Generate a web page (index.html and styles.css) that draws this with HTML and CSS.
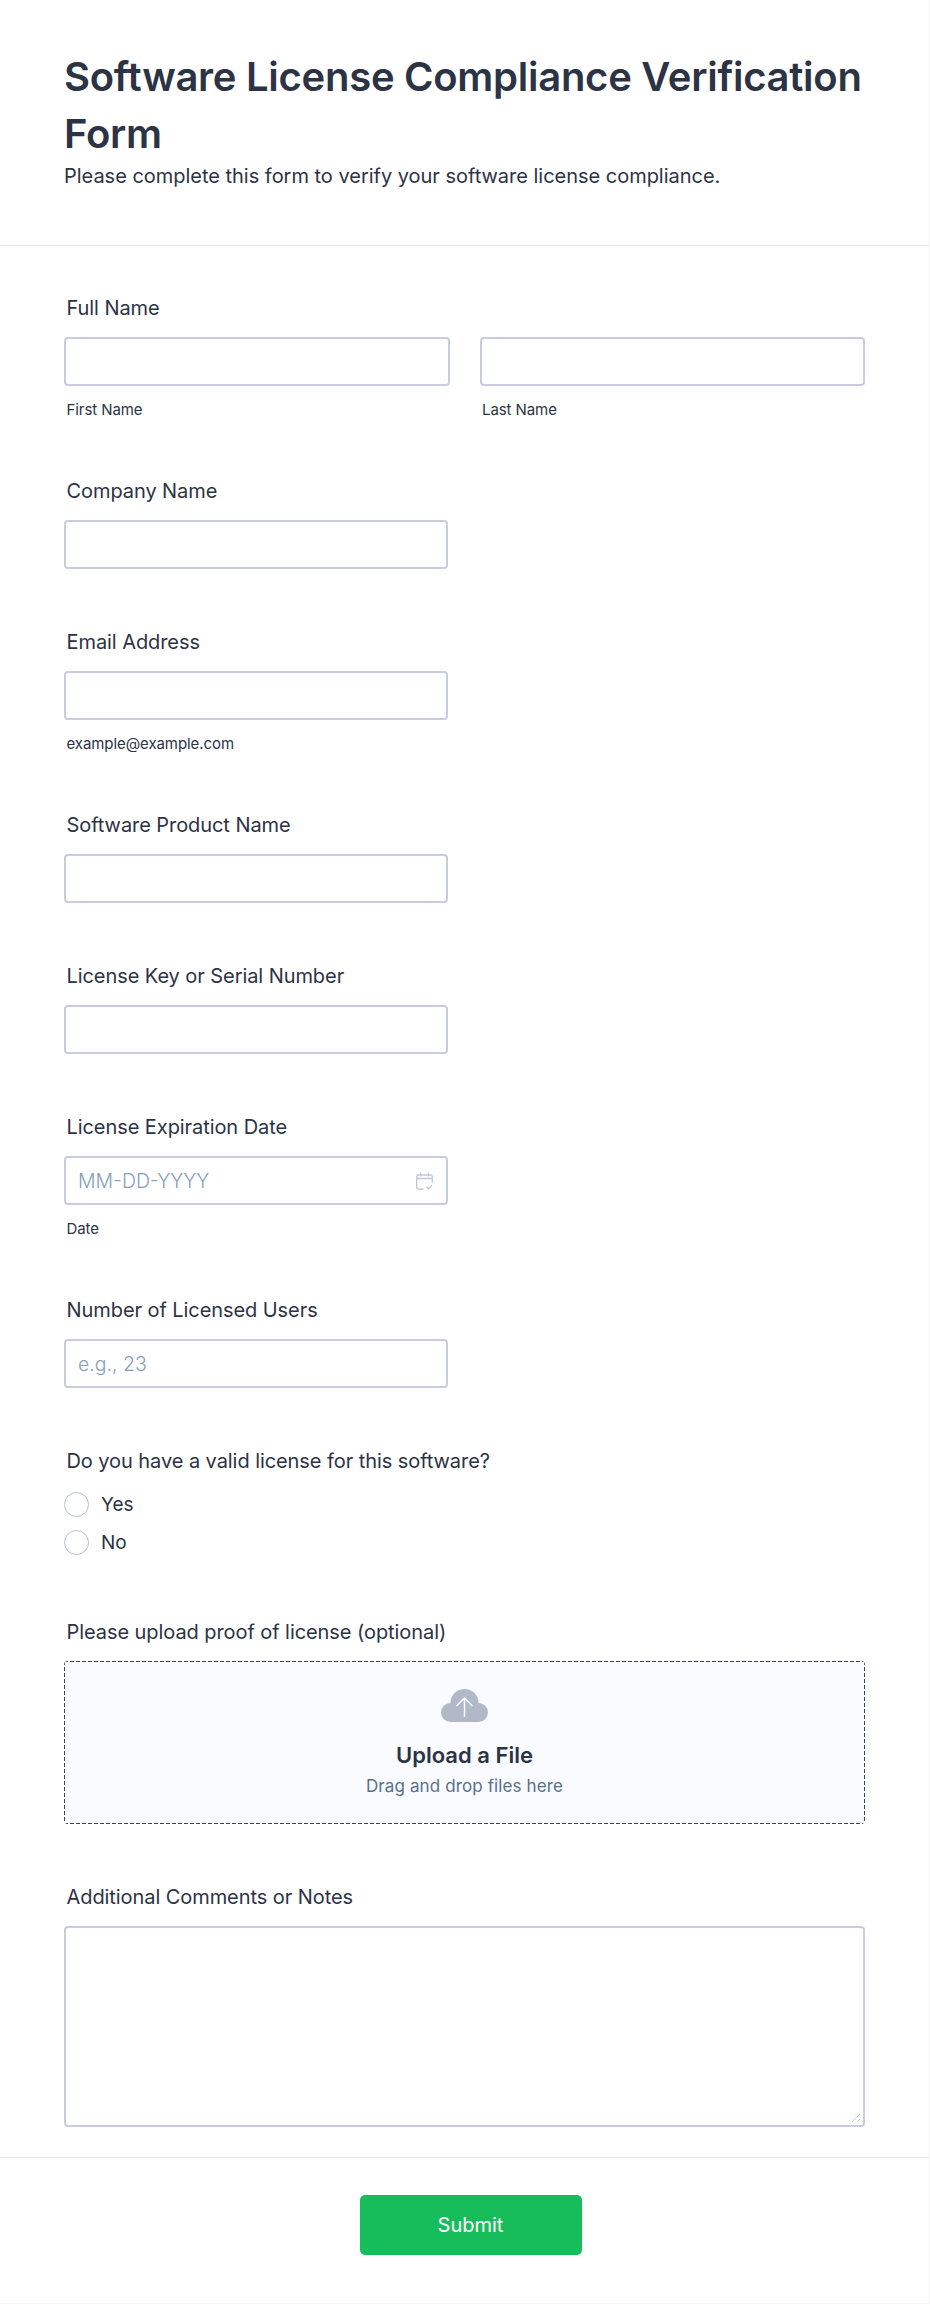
FILE: index.html
```
<!DOCTYPE html>
<html lang="en">
<head>
<meta charset="utf-8">
<title>Software License Compliance Verification Form</title>
<link rel="stylesheet" href="styles.css">
</head>
<body>
<form class="form">
  <header class="head">
    <h1>Software License Compliance Verification Form</h1>
    <p>Please complete this form to verify your software license compliance.</p>
  </header>
  <div class="fields">
    <div class="field first">
      <label class="label">Full Name</label>
      <div class="pair">
        <div class="col"><div class="input"></div><span class="sub">First Name</span></div>
        <div class="col"><div class="input"></div><span class="sub">Last Name</span></div>
      </div>
    </div>
    <div class="field"><label class="label">Company Name</label><div class="input short"></div></div>
    <div class="field"><label class="label">Email Address</label><div class="input short"></div><span class="sub">example@example.com</span></div>
    <div class="field"><label class="label">Software Product Name</label><div class="input short"></div></div>
    <div class="field"><label class="label">License Key or Serial Number</label><div class="input short"></div></div>
    <div class="field">
      <label class="label">License Expiration Date</label>
      <div class="input short ph-row"><span class="ph">MM-DD-YYYY</span>
        <svg class="cal" viewBox="0 0 17 18" fill="none" stroke="#c3c8d6" stroke-width="1.3"><path d="M7.500 17H2.500A1.800 1.800 0 0 1 .7 15.200V4.800A1.800 1.800 0 0 1 2.500 3h12a1.800 1.800 0 0 1 1.800 1.800V11M.7 6.500h15.600M4.700.5v4M12.300.5v4M10.500 15l1.800 1.800 3.700-3.700"/></svg>
      </div>
      <span class="sub">Date</span>
    </div>
    <div class="field"><label class="label">Number of Licensed Users</label><div class="input short ph-row"><span class="ph">e.g., 23</span></div></div>
    <div class="field radio-field">
      <label class="label">Do you have a valid license for this software?</label>
      <div class="radio"><i></i><span>Yes</span></div>
      <div class="radio"><i></i><span>No</span></div>
    </div>
    <div class="field">
      <label class="label">Please upload proof of license (optional)</label>
      <div class="upload">
        <svg class="cloud" viewBox="0 0 47 33"><path fill="#b1b8c8" d="M9.500 33A9.500 9.500 0 0 1 9.500 14 14 14 0 0 1 37.500 14 9.500 9.500 0 0 1 37.500 33Z"/><path fill="none" stroke="#fbfcff" stroke-width="1.500" d="M23.500 28V9M15.500 17 23.500 9l8 8"/></svg>
        <strong>Upload a File</strong>
        <span>Drag and drop files here</span>
      </div>
    </div>
    <div class="field"><label class="label">Additional Comments or Notes</label>
      <div class="input area">
        <svg class="grip" viewBox="0 0 10 10" stroke="#c3c8d6" stroke-width="1"><path d="M1 9 9 1M6 9l3-3"/></svg>
      </div>
    </div>
  </div>
  <footer class="foot"><button type="button" class="submit">Submit</button></footer>
</form>
</body>
</html>
```
FILE: styles.css
```
* { box-sizing: border-box; }
html, body { margin: 0; padding: 0; background: #fff; }
body { font-family: Inter, "Liberation Sans", sans-serif; color: #2c3345; }
.form { width: 930px; height: 2304px; background: #fff; border-right: 1px solid #f5f5f8; border-bottom: 1px solid #f5f5f8; }
.head { padding: 48px 40px 0 64px; height: 246px; border-bottom: 1px solid #e3e5ee; }
.head h1 { margin: 0; font-size: 40px; line-height: 57px; font-weight: 600; color: #2c3345; letter-spacing: -0.27px; }
.head p { margin: 0; font-size: 20px; line-height: 28px; color: #2c3345; letter-spacing: -0.02px; }
.fields { padding: 48px 64px 0; height: 1912px; border-bottom: 1px solid #e3e5ee; }
.field { margin-bottom: 59px; }
.first { margin-bottom: 59px; }
.radio-field { margin-bottom: 57px; }
.radio-field .label { margin-bottom: 10px; }
.label { display: block; margin: 0 0 15px 2.500px; font-size: 20px; line-height: 28px; color: #2c3345; letter-spacing: -0.07px; }
.pair { display: flex; gap: 30px; }
.col { flex: 0 0 385.500px; }
.input { height: 49px; width: 100%; border: 2px solid #c8ccdc; border-radius: 4px; background: #fff; }
.short { width: 384px; }
.sub { display: block; margin: 16px 0 0 2.500px; font-size: 15px; line-height: 16px; color: #2c3345; letter-spacing: -0.08px; }
.ph-row { display: flex; align-items: center; justify-content: space-between; padding: 0 13px 0 12px; }
.ph { font-size: 19.500px; color: #86a0bb; font-weight: 300; }
.cal { width: 17px; height: 18px; }
.radio { display: flex; align-items: center; gap: 12px; height: 38px; font-size: 19px; }
.radio i { width: 25px; height: 25px; border: 1.500px solid #b8bfd0; border-radius: 50%; }
.upload {
  height: 163px; width: 801px; border-radius: 4px;
  background:
    linear-gradient(to right, #3a4256 4px, transparent 4px) 0 0 / 6px 1px repeat-x,
    linear-gradient(to right, #3a4256 4px, transparent 4px) 0 100% / 6px 1px repeat-x,
    linear-gradient(to bottom, #3a4256 4px, transparent 4px) 0 0 / 1px 6px repeat-y,
    linear-gradient(to bottom, #3a4256 4px, transparent 4px) 100% 0 / 1px 6px repeat-y,
    #fafbff;
  display: flex; flex-direction: column; align-items: center;
}
.cloud { width: 47px; height: 33px; margin-top: 28px; }
.upload strong { margin-top: 18px; font-size: 22px; line-height: 30px; font-weight: 600; }
.upload span { margin-top: 4px; font-size: 17px; line-height: 24px; color: #57708d; letter-spacing: 0.12px; }
.area { position: relative; height: 201px; width: 801px; }
.grip { position: absolute; right: 2px; bottom: 2px; width: 10px; height: 10px; }
.foot { display: flex; justify-content: center; padding-top: 37px; }
.submit { width: 222px; height: 60px; margin-left: 12px; border: 0; border-radius: 5px; background: #18bd5b; color: #fff; font: 400 20px Inter, "Liberation Sans", sans-serif; }
```
